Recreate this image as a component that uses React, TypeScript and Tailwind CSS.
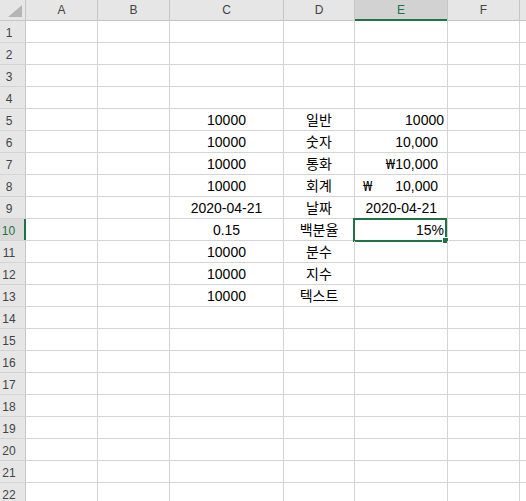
import React from 'react';

type Cell = { text?: React.ReactNode; align?: 'left' | 'center' | 'right'; cls?: string };

const cols = [
  { key: 'A', w: 'w-[72px]' },
  { key: 'B', w: 'w-[72px]' },
  { key: 'C', w: 'w-[114px]' },
  { key: 'D', w: 'w-[71px]' },
  { key: 'E', w: 'w-[93px]' },
  { key: 'F', w: 'w-[72px]' },
];

const labels = ['일반', '숫자', '통화', '회계', '날짜', '백분율', '분수', '지수', '텍스트'];
const cValues = ['10000', '10000', '10000', '10000', '2020-04-21', '0.15', '10000', '10000', '10000'];

const won = <span className="font-['Noto_Sans'] text-[14px]">₩</span>;

const eValues: Record<number, Cell> = {
  5: { text: '10000', align: 'right', cls: 'pr-[3px]' },
  6: { text: '10,000', align: 'right', cls: 'pr-[9px]' },
  7: {
    text: (
      <span>
        {won}10,000
      </span>
    ),
    align: 'right',
    cls: 'pr-[9px]',
  },
  8: {
    text: (
      <span className="flex w-full justify-between">
        {won}
        <span>10,000</span>
      </span>
    ),
    cls: 'pl-[8px] pr-[9px]',
  },
  9: { text: '2020-04-21', align: 'right', cls: 'pr-[10px]' },
  10: { text: '15%', align: 'right', cls: 'pr-[3px]' },
};

function cellFor(row: number, col: string): Cell {
  const i = row - 5;
  if (i < 0 || i > 8) return {};
  if (col === 'C') return { text: cValues[i], align: 'center' };
  if (col === 'D') return { text: labels[i], align: 'center' };
  if (col === 'E') return eValues[row] ?? {};
  return {};
}

const alignCls = { left: 'justify-start', center: 'justify-center', right: 'justify-end' };

export default function App() {
  const rows = Array.from({ length: 22 }, (_, i) => i + 1);

  return (
    <div
      className="h-[501px] w-[526px] overflow-hidden bg-white text-[14px] text-black"
      style={{ fontFamily: '"Liberation Sans", "Noto Sans CJK KR", sans-serif' }}
    >
      {/* column headers */}
      <div className="flex h-[21px] border-b border-[#c6c6c6] bg-[#e6e6e6] text-[12px] text-[#444]">
        <div className="relative w-[26px] shrink-0 border-r border-[#c6c6c6]">
          <svg className="absolute left-[8px] top-[5px]" width="14" height="12" viewBox="0 0 14 12">
            <polygon points="14,0 14,12 0,12" fill="#b5b5b5" />
          </svg>
        </div>
        {cols.map((c) => (
          <div
            key={c.key}
            className={`${c.w} flex shrink-0 items-center justify-center border-r border-[#c6c6c6] ${
              c.key === 'E' ? 'relative bg-[#d2d2d2] text-[#217346]' : ''
            }`}
          >
            {c.key}
            {c.key === 'E' && <div className="absolute -bottom-px left-0 right-0 h-[2px] bg-[#217346]" />}
          </div>
        ))}
        <div className="flex-1" />
      </div>

      {rows.map((r) => (
        <div key={r} className="flex h-[22px] border-b border-[#d4d4d4]">
          <div
            className={`flex w-[26px] shrink-0 items-center justify-center pr-[7px] pt-[2px] text-[12px] ${
              r === 10
                ? 'border-r-2 border-[#217346] bg-[#dadada] text-[#217346]'
                : 'border-r border-[#c6c6c6] bg-[#e6e6e6] text-[#444]'
            }`}
          >
            {r}
          </div>
          {cols.map((c) => {
            const cell = cellFor(r, c.key);
            const selected = r === 10 && c.key === 'E';
            return (
              <div
                key={c.key}
                className={`${c.w} relative flex shrink-0 items-end border-r border-[#d4d4d4] pb-[1px] leading-[18px] ${
                  alignCls[cell.align ?? 'left']
                } ${cell.cls ?? ''}`}
              >
                {cell.text}
                {selected && (
                  <div className="absolute -left-[2px] -top-px bottom-[-2px] right-0 border-2 border-[#217346]">
                    <div className="absolute -bottom-[4px] -right-[4px] h-[7px] w-[7px] border border-white bg-[#217346]" />
                  </div>
                )}
              </div>
            );
          })}
          <div className="flex-1" />
        </div>
      ))}
    </div>
  );
}
